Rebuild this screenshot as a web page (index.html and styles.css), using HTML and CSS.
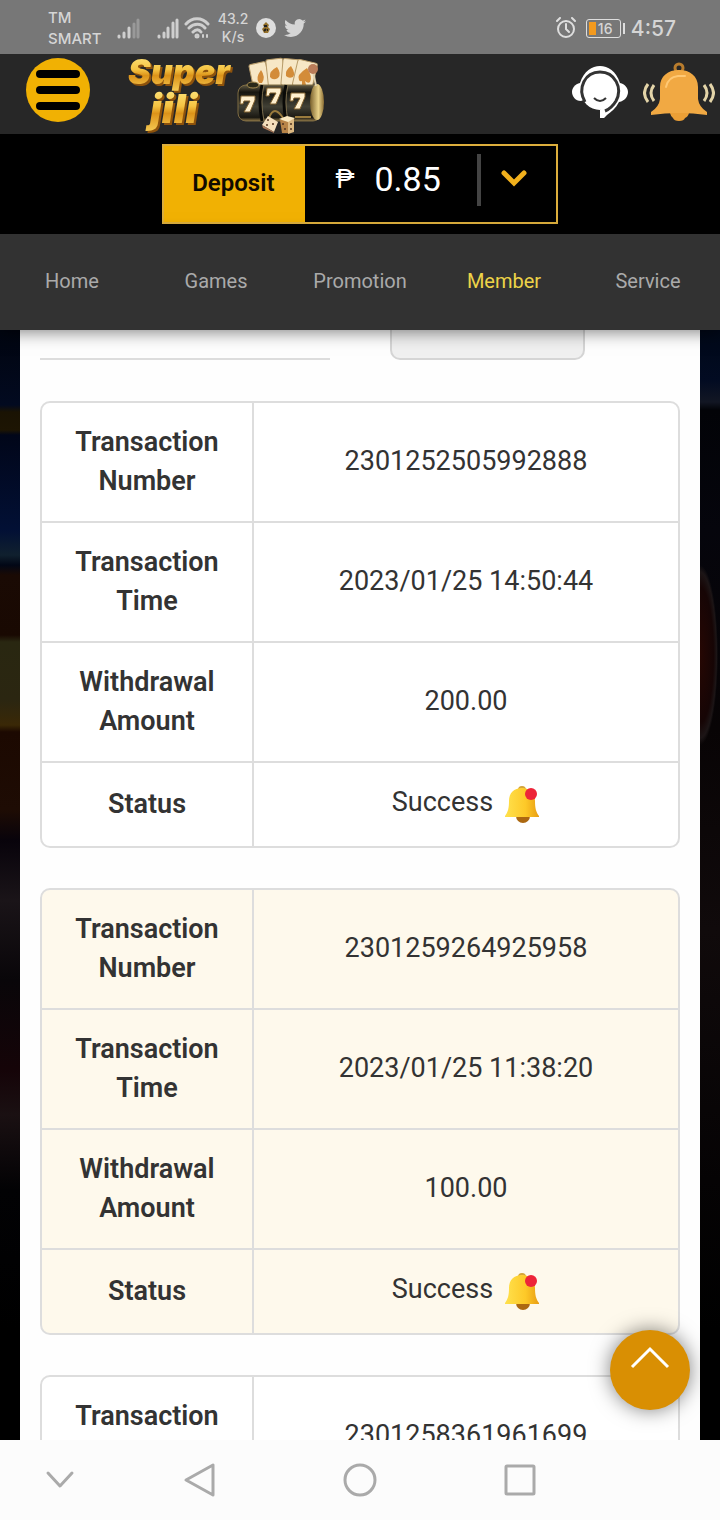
FILE: index.html
```html
<!DOCTYPE html>
<html lang="en">
<head>
    <meta charset="UTF-8">
    <meta name="viewport" content="width=device-width, initial-scale=1.0">
    <title>Super Jili - Member</title>
    <link rel="stylesheet" href="styles.css">
</head>
<body>
    <div class="status-bar">
        <div class="carrier">TM<br>SMART</div>
        <svg class="signal" width="64" height="24" viewBox="0 0 64 24">
            <g stroke="#cfcfcf" stroke-width="3" stroke-linecap="round">
                <path d="M3 20v1M8 17v4M13 12v9M43 20v1M48 17v4M52 12v9M57 7v14M61 4v17"/>
                <path d="M18 8v13M22 4v17" stroke="#999"/>
            </g>
        </svg>
        <svg class="wifi" width="26" height="24" viewBox="0 0 26 24" fill="none" stroke="#cfcfcf" stroke-width="3" stroke-linecap="round">
            <path d="M2 8C8 1 18 1 24 8M5 12c5-5 12-5 16 0M9 16c3-3 6-3 8 0"/>
            <circle cx="13" cy="20" r="1" fill="#cfcfcf"/>
            <path d="M19 19v2M23 19v2" stroke-width="2"/>
        </svg>
        <div class="speed">43.2<br>K/s</div>
        <svg class="app-badge" width="20" height="20" viewBox="0 0 20 20">
            <circle cx="10" cy="10" r="10" fill="#dedede"/>
            <path d="M7 7l3-3 3 3-1 2 2 2-2 4H8l-2-4 2-2z" fill="#94712c"/>
            <path d="M8 8h3M10 11l-2 2M12 12h-1" stroke="#222" stroke-width="2"/>
        </svg>
        <svg class="bird" width="22" height="20" viewBox="0 0 24 20">
            <path fill="#d5d5d5" d="M24 2.6c-.9.4-1.8.7-2.8.8 1-.6 1.8-1.6 2.1-2.7-.9.5-2 1-3.1 1.2A4.9 4.9 0 0 0 11.8 6.300C7.700 6.100 4.100 4.100 1.700 1.200.4 3.300 1 6.200 3.200 7.700c-.8 0-1.600-.2-2.200-.6 0 2.400 1.600 4.400 3.900 4.900-.7.2-1.500.2-2.200.1.600 2 2.400 3.300 4.600 3.400A9.900 9.900 0 0 1 0 17.500 14 14 0 0 0 7.500 19.700c9.100 0 14.300-7.700 14-14.600 1-.7 1.800-1.600 2.500-2.500z"/>
        </svg>
        <div class="status-right">
            <svg width="20" height="22" viewBox="0 0 20 22" fill="none" stroke="#dedede" stroke-width="2" stroke-linecap="round">
                <circle cx="10" cy="12" r="8"/>
                <path d="M10 7v5l3 3M1 4l3-3M19 4l-3-3"/>
            </svg>
            <div class="battery"><span class="battery-level"></span>16</div>
            <time>4:57</time>
        </div>
    </div>

    <header class="header">
        <button class="menu-btn" aria-label="Menu"><span></span><span></span><span></span></button>
        <a href="#" class="logo" aria-label="Super Jili">
            <svg width="204" height="80" viewBox="0 0 204 80">
                <defs>
                    <linearGradient id="gold" x1="0" y1="0" x2="0" y2="1">
                        <stop offset="0" stop-color="#ffeb8a"/>
                        <stop offset=".45" stop-color="#f5c443"/>
                        <stop offset=".6" stop-color="#dc9319"/>
                        <stop offset="1" stop-color="#f8cf58"/>
                    </linearGradient>
                    <linearGradient id="drum" x1="0" y1="0" x2="0" y2="1">
                        <stop offset="0" stop-color="#605944"/>
                        <stop offset=".2" stop-color="#171610"/>
                        <stop offset=".6" stop-color="#414035"/>
                        <stop offset=".9" stop-color="#1a1812"/>
                        <stop offset="1" stop-color="#8c7444"/>
                    </linearGradient>
                    <linearGradient id="cap" x1="0" y1="0" x2="1" y2="0">
                        <stop offset="0" stop-color="#79602c"/>
                        <stop offset=".6" stop-color="#ead38a"/>
                        <stop offset="1" stop-color="#8a6c33"/>
                    </linearGradient>
                </defs>
                <g class="logo-text" fill="url(#gold)">
                    <text x="2" y="30">Super</text>
                    <text x="24" y="69" class="logo-jili">jili</text>
                </g>
                <!-- cards -->
                <g fill="#f7e7c6" stroke="#b89c6a" stroke-width="1">
                    <rect x="125" y="9" width="17" height="25" rx="2" transform="rotate(-12 133 21)"/>
                    <rect x="141" y="5" width="17" height="27" rx="2" transform="rotate(-6 149 18)"/>
                    <rect x="156" y="5" width="17" height="27" rx="2" transform="rotate(5 164 18)"/>
                    <rect x="169" y="7" width="20" height="27" rx="2" transform="rotate(13 179 20)"/>
                </g>
                <g fill="#d38c39">
                    <path d="M133 29q-4-5 2-13 5 7 1 13zM144 23q-1-6 7-10 5 7 1 11-5 3-8-1zM160 22q-1-6 5-10 5 8 2 11-4 2-7-1z"/>
                    <path d="M173 26q-3-5 8-12 6 9 3 14-2 2-5-1l1 4h-4v-4q-2 1-3-1z"/>
                </g>
                <!-- reels -->
                <rect x="112" y="31" width="83" height="36" rx="8" fill="url(#drum)" stroke="#7f6c43"/>
                <path d="M136 31q-4 16 0 36M160 31q-4 16 0 36" fill="none" stroke="#090907" stroke-width="3"/>
                <path d="M138 31q-4 16 0 36M162 31q-4 16 0 36" fill="none" stroke="#77694a"/>
                <ellipse cx="127" cy="31" rx="6" ry="3" fill="#292819" stroke="#a58b50"/>
                <ellipse cx="191" cy="48" rx="7" ry="18" fill="url(#cap)"/>
                <path d="M187 17l3 15" stroke="#dfd2b0" stroke-width="2"/>
                <circle cx="187" cy="15" r="5" fill="#b97c59"/>
                <g fill="#fff0cf" stroke="#80602e" stroke-width="1">
                    <path d="M115 42h14v4l-5 12h-6l6-11h-6l-1 3h-3z"/>
                    <path d="M141 34h14v4l-5 12h-6l6-11h-6l-1 3h-3z"/>
                    <path d="M165 39h14v4l-5 12h-6l6-11h-6l-1 3h-3z"/>
                </g>
                <path d="M143 64q5-14 14 0M169 63h16" fill="none" stroke="#9a7b3d" stroke-width="2"/>
                <!-- dice -->
                <path d="M142 62l10 6-4 10-12-7z" fill="#f4dfbd"/>
                <path d="M136 71l12 7v1l-11-5z" fill="#ad7959"/>
                <path d="M154 66h8v13h-6z" fill="#b88448"/>
                <path d="M162 67l6-3v14l-6 2z" fill="#dcb780"/>
                <path d="M153 65l8-3 8 2-7 4z" fill="#fae8c0"/>
                <g fill="#533522">
                    <circle cx="142" cy="66" r="1"/><circle cx="147" cy="70" r="1"/><circle cx="141" cy="71" r="1"/>
                    <circle cx="157" cy="70" r="1"/><circle cx="159" cy="75" r="1"/><circle cx="165" cy="70" r="1"/><circle cx="165" cy="75" r="1"/>
                </g>
            </svg>
        </a>
        <div class="header-actions">
            <button class="icon-btn" aria-label="Customer service">
                <svg width="56" height="54" viewBox="0 0 56 54">
                    <path d="M8 18C12 6 20 1 28 1s16 5 20 17c5 1 8 5 8 9s-3 9-9 10c-3 6-8 10-12 13l-3 3h-4v-8h1l-1-5z" fill="#fff"/>
                    <path d="M8 18c-5 1-8 5-8 9s3 9 9 9l5-2V18z" fill="#fff"/>
                    <circle cx="28" cy="26" r="19" fill="#fff"/>
                    <path d="M13 37C5 23 13 7 28 7c15 0 23 16 16 29-3 5-6 8-11 10" fill="none" stroke="#333" stroke-width="3"/>
                    <path d="M22 33q6 6 12 0" fill="none" stroke="#333" stroke-width="2"/>
                </svg>
            </button>
            <button class="icon-btn" aria-label="Notifications">
                <svg width="72" height="60" viewBox="0 0 72 60">
                    <circle cx="36" cy="6" r="4" fill="none" stroke="#b87c2d" stroke-width="3"/>
                    <path d="M17 25C17 14 25 8 36 8s19 6 19 17v12q1 8 9 13v3q-28-4-56 0v-3q8-5 9-13z" fill="#f1a943"/>
                    <path d="M27 51h19q-1 4-4 5-1 3-6 3t-6-3q-2-1-3-5z" fill="#eb9f36"/>
                    <path d="M23 25q2-10 12-11h7" fill="none" stroke="#ffc873" stroke-width="2" stroke-linecap="round"/>
                    <path d="M5 22q-7 9 0 18M11 23q-6 8 0 16M61 23q6 8 0 16M67 22q7 9 0 18" fill="none" stroke="#e3d4a8" stroke-width="3"/>
                </svg>
            </button>
        </div>
    </header>

    <div class="wallet-bar">
        <div class="wallet">
            <button class="deposit-btn">Deposit</button>
            <div class="balance">
                <span class="currency">₱</span>
                <span class="amount">0.85</span>
            </div>
            <button class="wallet-toggle" aria-label="Show wallet">
                <svg width="26" height="18" viewBox="0 0 26 18"><path d="M3 4l10 10L23 4" fill="none" stroke="#f1b01c" stroke-width="5" stroke-linecap="round"/></svg>
            </button>
        </div>
    </div>

    <nav class="main-nav">
        <a href="#">Home</a>
        <a href="#">Games</a>
        <a href="#">Promotion</a>
        <a href="#" class="active">Member</a>
        <a href="#">Service</a>
    </nav>

    <main class="content">
        <div class="panel">
            <form class="filter">
                <input type="text" class="filter-input" aria-label="Date">
                <button type="button" class="filter-btn" aria-label="Search"></button>
            </form>

            <table class="record">
                <tr><th scope="row">Transaction Number</th><td>2301252505992888</td></tr>
                <tr><th scope="row">Transaction Time</th><td>2023/01/25 14:50:44</td></tr>
                <tr><th scope="row">Withdrawal Amount</th><td>200.00</td></tr>
                <tr class="status-row">
                    <th scope="row">Status</th>
                    <td>
                        <span class="status"><span>Success</span>
                            <svg width="36" height="38" viewBox="0 0 36 38">
                                <defs>
                                    <linearGradient id="bell" x1="0" y1="0" x2="1" y2="0">
                                        <stop offset="0" stop-color="#ffe14d"/>
                                        <stop offset=".6" stop-color="#fdc928"/>
                                        <stop offset="1" stop-color="#e99e13"/>
                                    </linearGradient>
                                </defs>
                                <circle cx="18" cy="4" r="3" fill="none" stroke="#d4a539" stroke-width="2"/>
                                <circle cx="19" cy="30" r="7" fill="#ac6811"/>
                                <path d="M5 15C5 7 10 2 18 2s13 5 13 13c0 7 1 11 4 15v1H1v-1c3-4 4-8 4-15z" fill="url(#bell)"/>
                                <circle cx="27" cy="8" r="6" fill="#ed2439"/>
                            </svg>
                        </span>
                    </td>
                </tr>
            </table>

            <table class="record alt">
                <tr><th scope="row">Transaction Number</th><td>2301259264925958</td></tr>
                <tr><th scope="row">Transaction Time</th><td>2023/01/25 11:38:20</td></tr>
                <tr><th scope="row">Withdrawal Amount</th><td>100.00</td></tr>
                <tr class="status-row">
                    <th scope="row">Status</th>
                    <td>
                        <span class="status"><span>Success</span>
                            <svg width="36" height="38" viewBox="0 0 36 38">
                                <circle cx="18" cy="4" r="3" fill="none" stroke="#d4a539" stroke-width="2"/>
                                <circle cx="19" cy="30" r="7" fill="#ac6811"/>
                                <path d="M5 15C5 7 10 2 18 2s13 5 13 13c0 7 1 11 4 15v1H1v-1c3-4 4-8 4-15z" fill="url(#bell)"/>
                                <circle cx="27" cy="8" r="6" fill="#ed2439"/>
                            </svg>
                        </span>
                    </td>
                </tr>
            </table>

            <table class="record">
                <tr><th scope="row">Transaction Number</th><td>2301258361961699</td></tr>
            </table>
        </div>
        <button class="to-top" aria-label="Back to top">
            <svg width="40" height="24" viewBox="0 0 40 24"><path d="M2 21L20 3l18 18" fill="none" stroke="#fff" stroke-width="3"/></svg>
        </button>
    </main>

    <div class="system-nav">
        <button aria-label="Hide"><svg width="36" height="36" viewBox="0 0 36 36"><path d="M6 11l12 13 12-13"/></svg></button>
        <button aria-label="Back"><svg width="36" height="36" viewBox="0 0 36 36"><path d="M4 18L31 3v30z"/></svg></button>
        <button aria-label="Home"><svg width="36" height="36" viewBox="0 0 36 36"><circle cx="18" cy="18" r="15"/></svg></button>
        <button aria-label="Recent"><svg width="36" height="36" viewBox="0 0 36 36"><rect x="4" y="4" width="28" height="28" rx="1"/></svg></button>
    </div>
</body>
</html>
```
FILE: styles.css
```css
* {
    box-sizing: border-box;
}

body {
    margin: 0;
    height: 100vh;
    display: flex;
    flex-direction: column;
    overflow: hidden;
    background-color: #000;
    font-family: Roboto, sans-serif;
    color: #333;
}

button {
    border: none;
    padding: 0;
    background: none;
    font-family: inherit;
    cursor: pointer;
}

svg {
    display: block;
    flex-shrink: 0;
}

a {
    text-decoration: none;
}

/* status bar */
.status-bar {
    display: flex;
    align-items: center;
    flex-shrink: 0;
    height: 54px;
    padding: 2px 44px 0 48px;
    background-color: #777;
    color: #d5d5d5;
    font-family: Inter, sans-serif;
    font-weight: 500;
}

.carrier {
    width: 68px;
    font-size: 15px;
    line-height: 21px;
}

.wifi {
    margin-left: 4px;
}

.speed {
    width: 38px;
    margin-left: 4px;
    font-size: 14px;
    line-height: 18px;
    text-align: center;
}

.app-badge {
    margin-left: 4px;
}

.bird {
    margin-left: 8px;
}

.status-right {
    display: flex;
    align-items: center;
    gap: 10px;
    margin-left: auto;
}

.status-right time {
    font-size: 21px;
}

.battery {
    position: relative;
    display: flex;
    align-items: center;
    gap: 2px;
    width: 35px;
    height: 19px;
    padding: 2px;
    border: 1px solid #dedede;
    border-radius: 3px;
    font-size: 14px;
}

.battery::after {
    content: "";
    position: absolute;
    right: -5px;
    top: 3px;
    width: 2px;
    height: 11px;
    background-color: #dedede;
}

.battery-level {
    width: 7px;
    height: 13px;
    background-color: #f39a1e;
}

/* header */
.header {
    display: flex;
    align-items: center;
    flex-shrink: 0;
    height: 80px;
    padding: 0 5px 0 26px;
    background-color: #272727;
}

.menu-btn {
    display: flex;
    flex-direction: column;
    align-items: center;
    justify-content: center;
    gap: 8px;
    width: 64px;
    height: 64px;
    margin-bottom: 8px;
    border-radius: 50%;
    background-color: #f1b103;
}

.menu-btn span {
    width: 44px;
    height: 8px;
    border-radius: 4px;
    background-color: #000;
}

.logo {
    margin-left: 36px;
}

.logo-text {
    font-family: Inter, sans-serif;
    font-size: 34px;
    font-weight: 900;
    font-style: italic;
    filter: drop-shadow(2px 2px 0 #8d520c);
}

.logo-jili {
    font-size: 40px;
}

.header-actions {
    display: flex;
    align-items: center;
    gap: 15px;
    margin-left: auto;
    padding-bottom: 4px;
}

/* wallet */
.wallet-bar {
    display: flex;
    justify-content: center;
    flex-shrink: 0;
    padding: 10px;
    background-color: #000;
}

.wallet {
    display: flex;
    height: 80px;
    border: 2px solid #dcae3c;
}

.deposit-btn {
    padding: 0 31px 2px 28px;
    background-color: #f1b103;
    color: #110b00;
    font-size: 24px;
    font-weight: 600;
}

.balance {
    display: flex;
    align-items: center;
    gap: 20px;
    margin: 8px 0 16px;
    padding: 0 36px 2px 30px;
    border-right: 4px solid #444;
    color: #fff;
}

.currency {
    font-size: 26px;
}

.amount {
    font-size: 34px;
}

.wallet-toggle {
    padding: 0 29px 12px 20px;
}

/* main nav */
.main-nav {
    position: relative;
    z-index: 1;
    display: grid;
    grid-template-columns: repeat(5, 1fr);
    align-items: center;
    flex-shrink: 0;
    height: 96px;
    padding-bottom: 2px;
    background-color: #323232;
    box-shadow: 0 2px 16px rgba(0, 0, 0, 0.5);
}

.main-nav a {
    color: #aaa;
    font-size: 20px;
    text-align: center;
}

.main-nav .active {
    color: #edd348;
}

/* records */
.content {
    position: relative;
    flex: 1;
    min-height: 0;
    padding: 0 20px;
    overflow: hidden;
    background-color: #000;
    background-image:
        linear-gradient(#010510 0, #020a20 75px, #1a1303 82px, #1d1503 100px, #010619 105px, #021035 200px, #10202e 225px, #020716 235px, #1a0a04 245px, #190902 305px, #292711 312px, #2b2611 370px, #3a2806 395px, #1c0901 402px, #1e0c04 480px, #08030b 510px, #1a1418 570px, #090609 650px, #150408 740px, #1a1012 785px, #020204 860px, #000 1000px),
        radial-gradient(ellipse 18px 90px at 0 325px, #260703 0, #160505 75%, #1c1516 92%, transparent 100%),
        linear-gradient(#000818 0, #020b22 50px, #121623 72px, #020307 80px, #05050c 200px, #080405 400px, #100a0b 600px, #050304 850px, #000 1000px);
    background-position: left top, right top, right top;
    background-size: 20px 100%;
    background-repeat: no-repeat;
}

.panel {
    min-height: 100%;
    padding: 0 20px;
    background-color: #fefefe;
}

.filter {
    display: flex;
    align-items: flex-end;
    gap: 60px;
    height: 30px;
    margin-bottom: 41px;
}

.filter-input {
    width: 290px;
    height: 60px;
    border: none;
    border-bottom: 2px solid #ddd;
    background: none;
}

.filter-btn {
    width: 195px;
    height: 60px;
    border: 2px solid #d5d5d5;
    border-radius: 10px;
    background-color: #f0f0f0;
}

.record {
    width: 100%;
    margin-bottom: 40px;
    table-layout: fixed;
    border: 2px solid #ddd;
    border-radius: 10px;
    border-spacing: 0;
    background-color: #fff;
    font-size: 27px;
    line-height: 39px;
    text-align: center;
}

.record.alt {
    background-color: #fef9ec;
}

.record th,
.record td {
    padding: 20px;
    border-bottom: 2px solid #ddd;
}

.record th {
    width: 33.33%;
    border-right: 2px solid #ddd;
    font-weight: 600;
}

.record td {
    padding: 19px 20px 21px;
}

.record .status-row th,
.record .status-row td {
    height: 83px;
    border-bottom: none;
}

.record .status-row td {
    padding: 0 20px;
}

.status {
    display: flex;
    align-items: center;
    justify-content: center;
    gap: 11px;
}

.status span {
    padding-bottom: 4px;
}

.to-top {
    position: absolute;
    right: 30px;
    bottom: 30px;
    display: flex;
    justify-content: center;
    width: 80px;
    height: 80px;
    padding-top: 16px;
    border-radius: 50%;
    background-color: #d98f03;
    box-shadow: 0 0 20px rgba(0, 0, 0, 0.5);
}

/* system nav */
.system-nav {
    display: grid;
    grid-template-columns: 3fr 4fr 4fr 4fr 3fr;
    align-items: center;
    flex-shrink: 0;
    height: 80px;
    background-color: #fcfcfc;
}

.system-nav button {
    display: flex;
    justify-content: center;
}

.system-nav svg {
    fill: none;
    stroke: #aaa;
    stroke-width: 3;
    stroke-linejoin: round;
    stroke-linecap: round;
}
```
